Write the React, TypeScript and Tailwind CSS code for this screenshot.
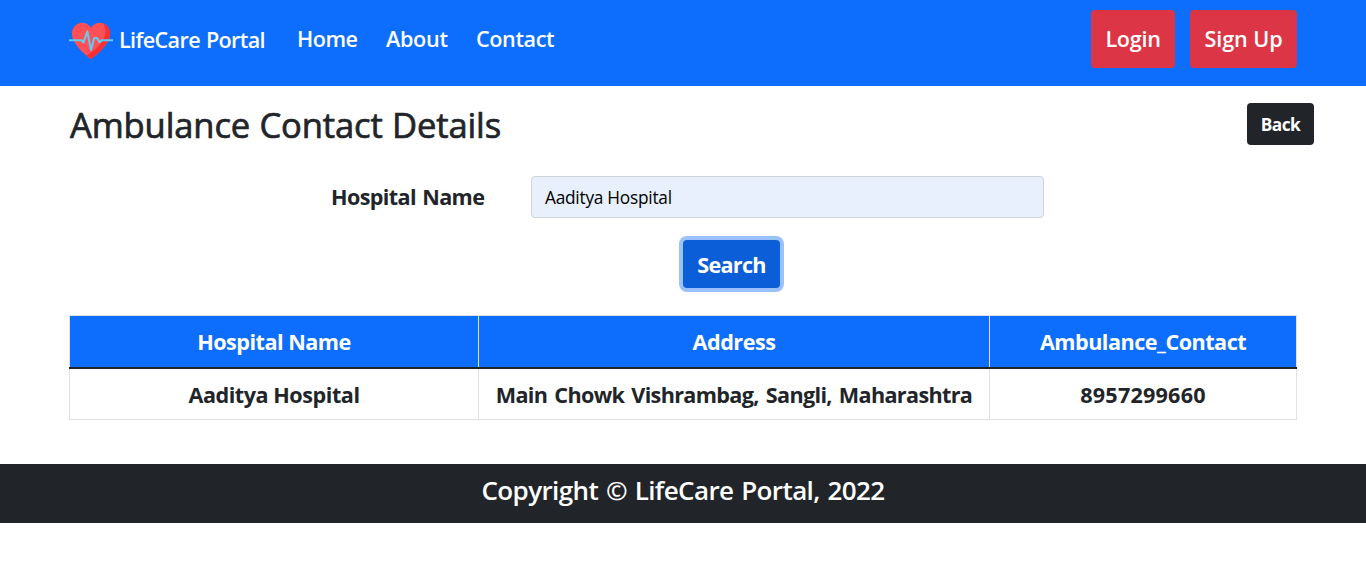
import React from "react";

const columns = ["Hospital Name", "Address", "Ambulance_Contact"];

function HeartLogo() {
  return (
    <svg className="mt-[3px] block h-11 w-11 shrink-0" viewBox="0 0 44 44" fill="none">
      <path
        d="M22 40C17.500 37 3 25.500 3 14.500C3 8 8 3.800 13 3.800C17 3.800 20.500 6 22 9C23.500 6 27 3.800 31 3.800C36 3.800 41 8 41 14.500C41 25.500 26.500 37 22 40Z"
        fill="#ff5055"
      />
      <path
        d="M33.500 4.200C37.800 5.500 41 9 41 14.500C41 25.500 26.500 37 22 40C20.800 39.200 19.200 38 17.600 36.500C27 31 36.500 22 36.500 12.500C36.500 9 35.500 6 33.500 4.200Z"
        fill="#f92f32"
      />
      <path
        d="M0 21.200H12.500L14.500 23.500L18.300 12.500L22 31L25.200 19H28L30.500 23.300L32.500 21.200H44"
        stroke="#62cdf0"
        strokeWidth="2"
        strokeLinejoin="round"
      />
    </svg>
  );
}

function Navbar() {
  return (
    <nav className="flex h-[86px] bg-[#0d6efd] px-[69px] pt-[9.500px] text-[21.600px] font-semibold text-white">
      <div className="flex h-[60px] items-center">
        <HeartLogo />
        <span className="ml-[6px] w-[147px] pt-0.5 tracking-[-0.630px] [word-spacing:1px]">LifeCare Portal</span>
        <span className="ml-[31px] w-[61px] tracking-[-0.500px]">Home</span>
        <span className="ml-[28px] w-[62px] tracking-[-0.300px]">About</span>
        <span className="ml-[28px] w-[78px] tracking-[-0.400px]">Contact</span>
      </div>
      <div className="ml-auto flex gap-[15px]">
        <button className="h-[58px] w-[84px] rounded bg-[#dc3545] pt-0.5 tracking-[-0.300px]">Login</button>
        <button className="h-[58px] w-[107px] rounded bg-[#dc3545] pt-0.5 tracking-[-0.100px]">Sign Up</button>
      </div>
    </nav>
  );
}

export default function App() {
  return (
    <div className="min-h-screen whitespace-nowrap bg-white font-['Open_Sans','Noto_Sans',sans-serif] text-[#212529]">
      <Navbar />
      <header className="flex items-start justify-between pl-[70px] pr-[52px] pt-[17px]">
        <h1 className="h-[46px] text-[34.600px] leading-[44px] tracking-[-0.140px] [-webkit-text-stroke:0.700px_#212529] [word-spacing:0.500px]">
          Ambulance Contact Details
        </h1>
        <button className="h-[42px] w-[67px] rounded bg-[#212529] pt-0.5 text-[17.300px] font-bold tracking-[-0.500px] text-white">
          Back
        </button>
      </header>
      <form className="mt-[27px] flex flex-col">
        <div className="flex items-center pl-[331px]">
          <label className="w-[200px] text-[21.600px] font-bold tracking-[-0.620px] [word-spacing:1.300px]">
            Hospital Name
          </label>
          <div className="flex h-[42px] w-[513px] items-center rounded border border-[#ced4da] bg-[#e8f0fe] pl-[13px] pt-0.5 text-[17.300px] tracking-[-0.250px] text-black">
            Aaditya Hospital
          </div>
        </div>
        <button
          type="button"
          className="ml-[683px] mt-[22px] h-12 w-[97px] rounded bg-[#0b5ed7] pt-0.5 text-[21.600px] font-bold tracking-[-0.700px] text-white ring-4 ring-[#98c1fe]"
        >
          Search
        </button>
      </form>
      <div className="ml-[69px] mt-[27px] w-[1228px] border border-[#dee2e6] text-center text-[21.600px] font-bold tracking-[-0.460px]">
        <div className="-mx-px grid h-[53px] grid-cols-[410px_511px_307px] border-b-2 border-[#212529] bg-[#0d6efd] text-white">
          {columns.map((name) => (
            <div
              key={name}
              className="flex items-center justify-center border-r border-[#dee2e6] pt-0.5 tracking-[-0.500px] first:border-l"
            >
              {name}
            </div>
          ))}
        </div>
        <div className="grid h-[50px] grid-cols-[409px_511px_306px]">
          <div className="flex items-center justify-center border-r border-[#dee2e6] pt-0.5">Aaditya Hospital</div>
          <div className="flex items-center justify-center border-r border-[#dee2e6] pt-0.5 tracking-[-0.660px] [word-spacing:2.100px]">
            Main Chowk Vishrambag, Sangli, Maharashtra
          </div>
          <div className="flex items-center justify-center pt-0.5 tracking-[0.200px]">8957299660</div>
        </div>
      </div>
      <footer className="mt-[44px] flex h-[59px] justify-center bg-[#212529] pt-[8px] text-[26px] font-semibold leading-[36px] tracking-[-0.600px] text-white [word-spacing:1.600px]">
        Copyright © LifeCare Portal, 2022
      </footer>
    </div>
  );
}
